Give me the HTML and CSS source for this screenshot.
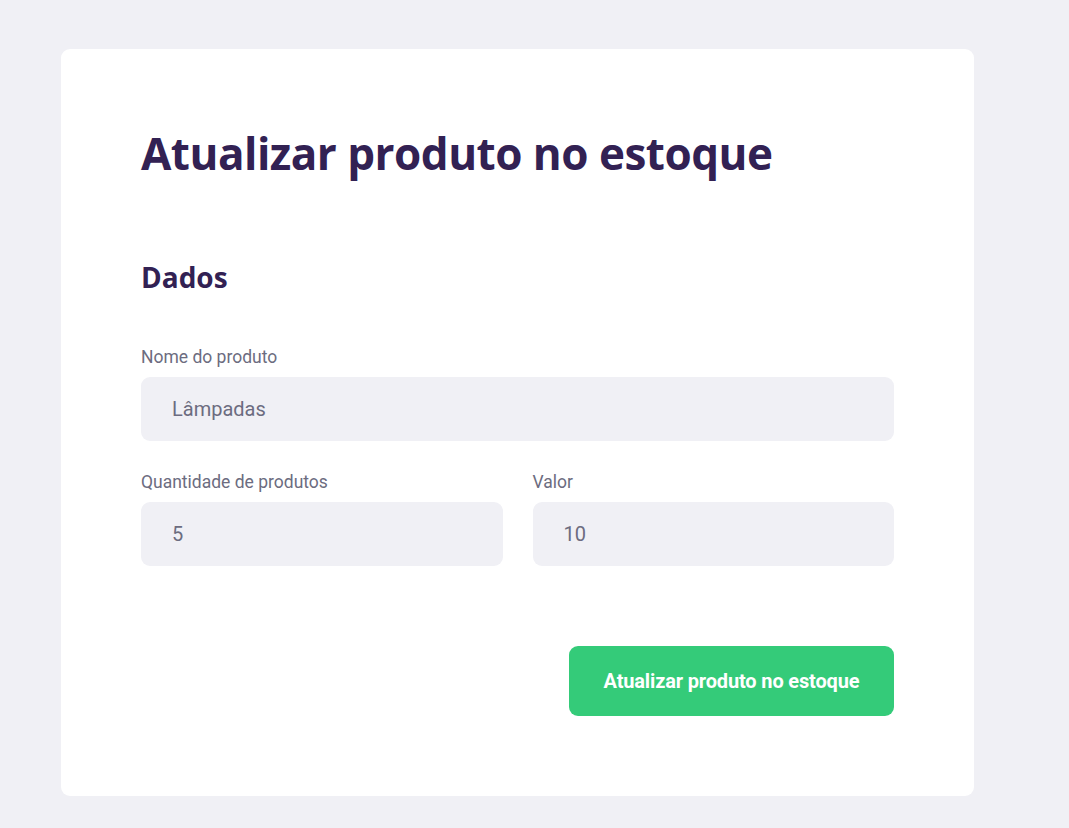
FILE: index.html
```html
<!DOCTYPE html>
<html lang="pt-BR">
<head>
<meta charset="utf-8">
<title>Atualizar produto no estoque</title>
<link rel="stylesheet" href="styles.css">
</head>
<body>
  <div class="page">
    <form class="card">
      <h1 class="title">Atualizar produto no estoque</h1>
      <fieldset class="group">
        <legend class="legend">Dados</legend>
        <div class="field">
          <label class="label" for="name">Nome do produto</label>
          <input class="input" id="name" type="text" value="Lâmpadas">
        </div>
        <div class="field-row">
          <div class="field">
            <label class="label" for="qty">Quantidade de produtos</label>
            <input class="input" id="qty" type="text" value="5">
          </div>
          <div class="field">
            <label class="label" for="price">Valor</label>
            <input class="input" id="price" type="text" value="10">
          </div>
        </div>
      </fieldset>
      <div class="actions">
        <button class="button" type="button">Atualizar produto no estoque</button>
      </div>
    </form>
  </div>
</body>
</html>
```
FILE: styles.css
```css
* {
  box-sizing: border-box;
}

html, body {
  margin: 0;
  padding: 0;
  background: #f0f0f5;
}

body {
  font-family: Roboto, "Liberation Sans", sans-serif;
  color: #6c6c80;
}

.page {
  padding: 49px 0 0 61px;
}

.card {
  width: 913px;
  height: 747px;
  background: #ffffff;
  border-radius: 9px;
  padding: 80px 80px 80px 80px;
  display: flex;
  flex-direction: column;
}

.title {
  margin: 0;
  font-family: "Open Sans", "Noto Sans", sans-serif;
  font-weight: 700;
  font-size: 44px;
  line-height: 48px;
  color: #322153;
  letter-spacing: -0.5px;
}

.group {
  margin: 83px 0 0 0;
  padding: 0;
  border: 0;
  min-width: 0;
}

.legend {
  padding: 0;
  margin: 0 0 52px 0;
  font-family: "Open Sans", "Noto Sans", sans-serif;
  font-weight: 700;
  font-size: 28px;
  line-height: 34px;
  color: #322153;
}

.field {
  display: flex;
  flex-direction: column;
  flex: 1;
  min-width: 0;
}

.field-row {
  display: flex;
  gap: 30px;
  margin-top: 30px;
}

.label {
  font-size: 17.5px;
  line-height: 20px;
  padding-top: 1px;
  margin-bottom: 10px;
  color: #6c6c80;
}

.input {
  height: 64px;
  width: 100%;
  border: 0;
  border-radius: 9px;
  background: #f0f0f5;
  padding: 0 31px;
  font-family: Roboto, "Liberation Sans", sans-serif;
  font-size: 20px;
  color: #6c6c80;
  outline: none;
}

.actions {
  display: flex;
  justify-content: flex-end;
  margin-top: 80px;
}

.button {
  width: 325px;
  height: 70px;
  border: 0;
  border-radius: 9px;
  background: #34cb79;
  color: #ffffff;
  font-family: Roboto, "Liberation Sans", sans-serif;
  font-weight: 700;
  font-size: 20px;
  letter-spacing: -0.15px;
  cursor: pointer;
}
```
